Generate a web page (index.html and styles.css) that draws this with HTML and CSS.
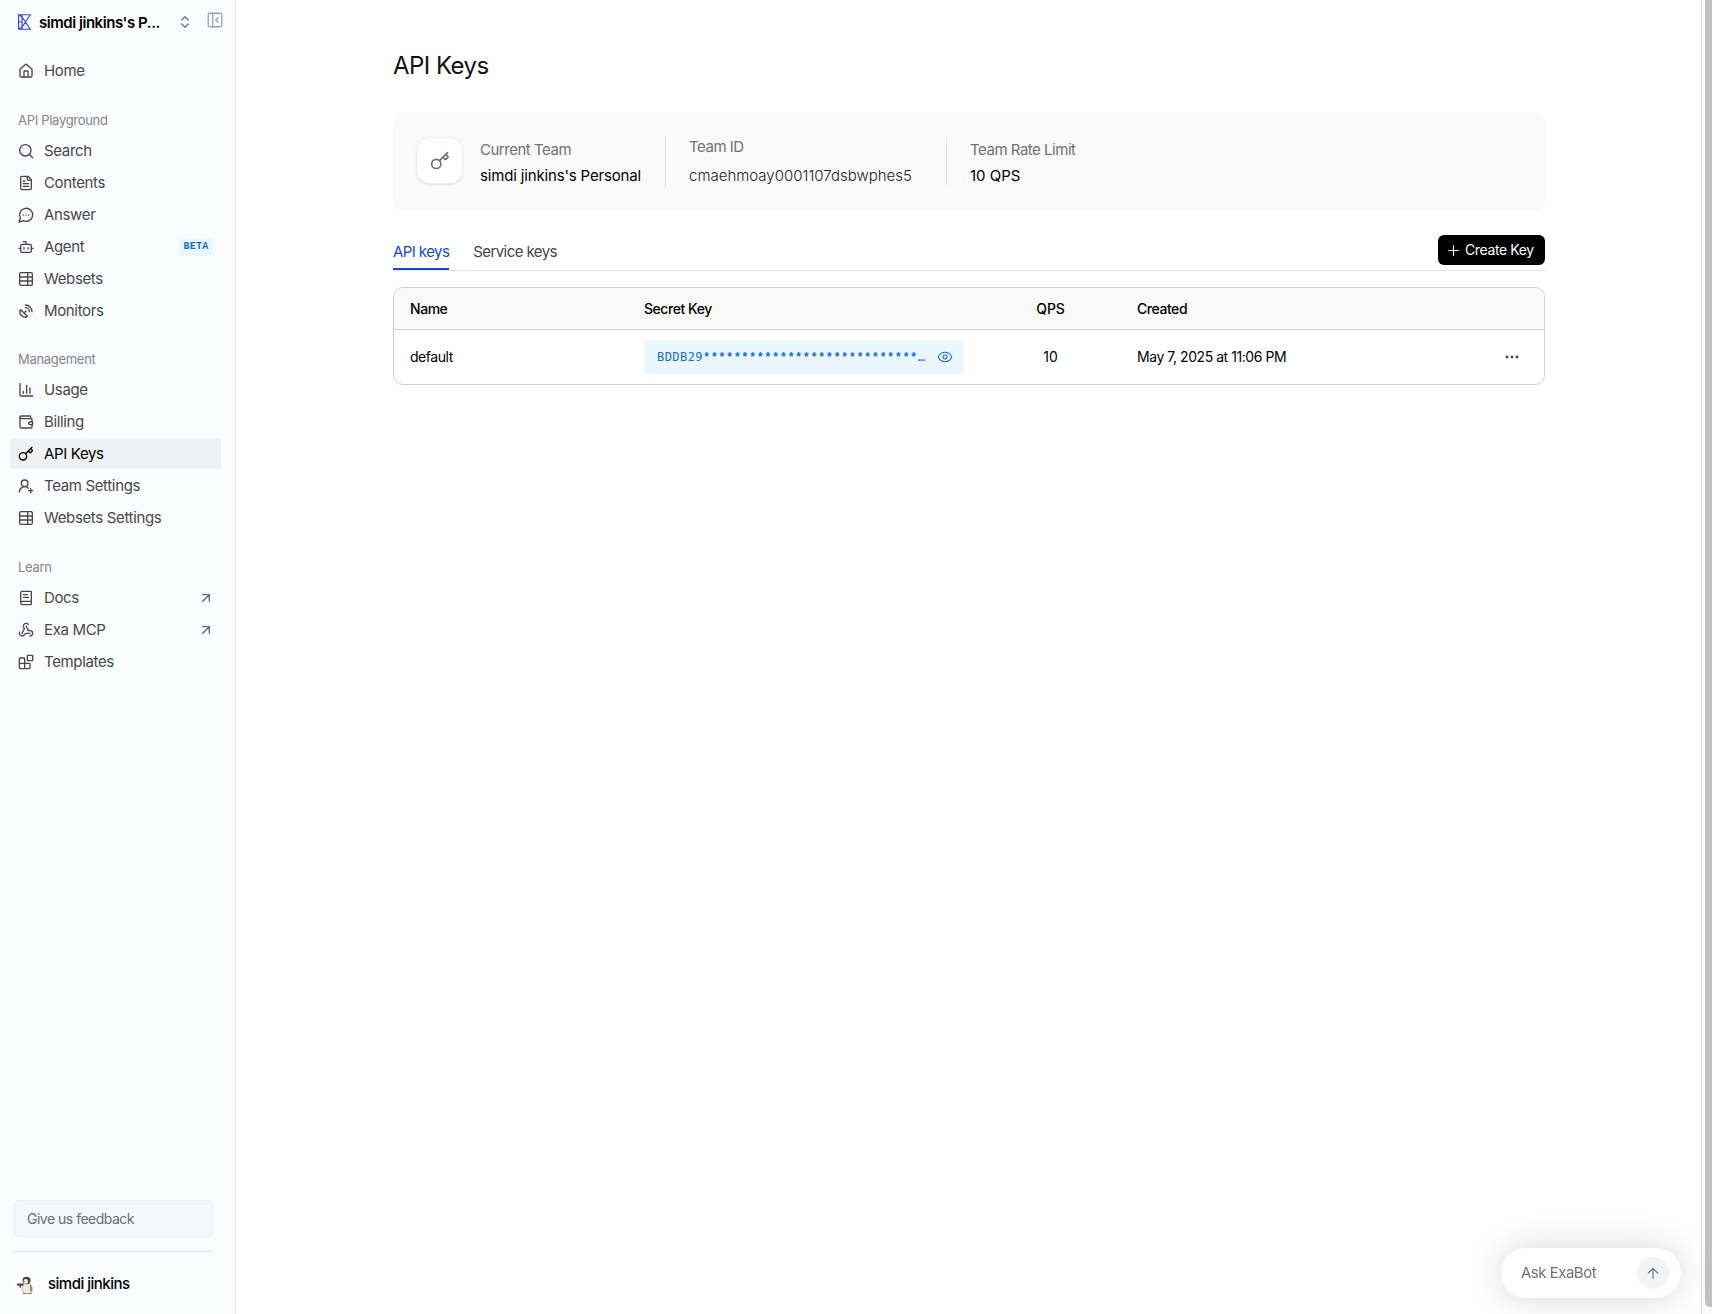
FILE: index.html
```html
<!DOCTYPE html>
<html lang="en">
<head>
    <meta charset="UTF-8">
    <meta name="viewport" content="width=device-width, initial-scale=1.0">
    <title>API Keys</title>
    <link rel="stylesheet" href="styles.css">
</head>
<body>
    <!-- Shared icons -->
    <svg class="sprite">
        <symbol id="i-key" viewBox="0 0 24 24"><path d="m15.5 7.5 2.3 2.3a1 1 0 0 0 1.4 0l2.1-2.1a1 1 0 0 0 0-1.4L19 4M21 2l-9.6 9.6"/><circle cx="7.5" cy="15.5" r="5.5"/></symbol>
        <symbol id="i-table" viewBox="0 0 24 24"><rect x="2.5" y="2.5" width="19" height="19" rx="2"/><path d="M3 9h18M3 15h18M14.500 3v18"/></symbol>
        <symbol id="i-out" viewBox="0 0 24 24"><path d="M7 7h10v10M7 17 17 7"/></symbol>
    </svg>

    <aside class="sidebar">
        <div class="team-switch">
            <svg class="logo" viewBox="0 0 13 16"><path d="M.6.7h11.8L7.5 8l4.9 7.3H.6zM4.1.7v14.6M.6 8h3.5M4.1 3l3.4 5-3.4 5M.6.7l3.5 2.3M.6 15.3 4.1 13"/></svg>
            <span class="team-name">simdi jinkins's P...</span>
            <svg class="icon chevrons" viewBox="0 0 24 24"><path d="m7 15 5 5 5-5M7 9l5-5 5 5"/></svg>
            <svg class="icon collapse" viewBox="0 0 24 24"><rect x="3" y="3" width="18" height="18" rx="2"/><path d="M9 3v18M16 15l-3-3 3-3"/></svg>
        </div>

        <nav class="nav">
            <a class="item"><svg class="icon" viewBox="0 0 24 24"><path d="M15 21v-8a1 1 0 0 0-1-1h-4a1 1 0 0 0-1 1v8"/><path d="M3 10a2 2 0 0 1 .7-1.5l7-6a2 2 0 0 1 2.6 0l7 6A2 2 0 0 1 21 10v9a2 2 0 0 1-2 2H5a2 2 0 0 1-2-2z"/></svg>Home</a>
        </nav>

        <h2 class="label">API Playground</h2>
        <nav class="nav">
            <a class="item"><svg class="icon" viewBox="0 0 24 24"><circle cx="11" cy="11" r="8.5"/><path d="m22 22-4.8-4.8"/></svg>Search</a>
            <a class="item"><svg class="icon" viewBox="0 0 24 24"><path d="M15 2H6a2 2 0 0 0-2 2v16a2 2 0 0 0 2 2h12a2 2 0 0 0 2-2V7z"/><path d="M14 2v4a2 2 0 0 0 2 2h4M10 9H8M16 13H8M16 17H8"/></svg>Contents</a>
            <a class="item"><svg class="icon" viewBox="0 0 24 24"><path d="M7.9 20.500A9.800 9.800 0 1 0 3.500 16.100L1.500 22.500z"/><path d="M8 12h.01M12 12h.01M16 12h.01"/></svg>Answer</a>
            <a class="item"><svg class="icon" viewBox="0 0 24 24"><path d="M12 8V4H8M1.500 14H4M20 14h2.500M15 13v2M9 13v2"/><rect x="4" y="8" width="16" height="12" rx="2"/></svg>Agent<span class="beta">BETA</span></a>
            <a class="item"><svg class="icon"><use href="#i-table"/></svg>Websets</a>
            <a class="item"><svg class="icon" viewBox="0 0 24 24"><path d="M4 10a7.3 7.3 0 0 0 10 10ZM9 15l3-3M17 13a6 6 0 0 0-6-6M21 13A10 10 0 0 0 11 3"/></svg>Monitors</a>
        </nav>

        <h2 class="label label-tight">Management</h2>
        <nav class="nav">
            <a class="item"><svg class="icon" viewBox="0 0 24 24"><path d="M3 2v17a2 2 0 0 0 2 2h17M8 17v-3M13 17V5M18 17V9"/></svg>Usage</a>
            <a class="item"><svg class="icon" viewBox="0 0 24 24"><path d="M19 7V4a1 1 0 0 0-1-1H5a2 2 0 0 0 0 4h15a1 1 0 0 1 1 1v4h-3a2 2 0 0 0 0 4h3a1 1 0 0 0 1-1v-2a1 1 0 0 0-1-1"/><path d="M3 5v14a2 2 0 0 0 2 2h15a1 1 0 0 0 1-1v-4"/></svg>Billing</a>
            <a class="item active"><svg class="icon"><use href="#i-key"/></svg>API Keys</a>
            <a class="item"><svg class="icon" viewBox="0 0 24 24"><path d="M2 21a8 8 0 0 1 13.3-6M19 16v6M22 19h-6"/><circle cx="10" cy="8" r="5"/></svg>Team Settings</a>
            <a class="item"><svg class="icon"><use href="#i-table"/></svg>Websets Settings</a>
        </nav>

        <h2 class="label">Learn</h2>
        <nav class="nav">
            <a class="item"><svg class="icon" viewBox="0 0 24 24"><path d="M4 19.5v-15A2.5 2.5 0 0 1 6.5 2H19a1 1 0 0 1 1 1v18a1 1 0 0 1-1 1H6.5a1 1 0 0 1 0-5H20M8 11h8M8 7h6"/></svg>Docs<svg class="icon out"><use href="#i-out"/></svg></a>
            <a class="item"><svg class="icon" viewBox="0 0 24 24"><path d="M18 16.98h-5.99c-1.1 0-1.95.94-2.48 1.9A4 4 0 0 1 2 17c.01-.7.2-1.4.57-2"/><path d="m6 17 3.13-5.78c.53-.97.1-2.18-.5-3.1a4 4 0 1 1 6.89-4.06"/><path d="m12 6 3.13 5.73C15.66 12.7 16.9 13 18 13a4 4 0 0 1 0 8"/></svg>Exa MCP<svg class="icon out"><use href="#i-out"/></svg></a>
            <a class="item"><svg class="icon" viewBox="0 0 24 24"><rect x="14" y="2" width="8" height="8" rx="1"/><path d="M10 22V7a1 1 0 0 0-1-1H4a2 2 0 0 0-2 2v12a2 2 0 0 0 2 2h12a2 2 0 0 0 2-2v-5a1 1 0 0 0-1-1H2"/></svg>Templates</a>
        </nav>

        <div class="bottom">
            <button class="feedback">Give us feedback</button>
            <div class="user">
                <svg class="avatar" viewBox="0 0 24 24">
                    <circle cx="12" cy="12" r="12" fill="#fff"/>
                    <path d="M8.5 11c1-1 7.5-1 9 1.5 1.2 3 1 6.5-.5 8h-7c-1.5-2-2-6-1.5-9.5z" fill="#eeebe5" stroke="#a69e95" stroke-width=".7"/>
                    <path d="M16 11c2 2 2.5 6 1.5 8l-1.5-1z" fill="#8d8178"/>
                    <ellipse cx="12.5" cy="7.5" rx="4" ry="3.7" fill="#4a3f3b"/>
                    <ellipse cx="11.8" cy="8.5" rx="2.3" ry="2.4" fill="#f3efea"/>
                    <path d="m9.5 8.2 1.8-.6v1.5z" fill="#d69a4c"/>
                    <path d="M3 10.5h6.5v2.3H7v2H5.5v-2H3z" fill="#514b48"/>
                    <path d="M9 20.5h3.5M14 20.5h3.5" stroke="#8f6c52" stroke-width="1.2"/>
                </svg>
                <span>simdi jinkins</span>
            </div>
        </div>
    </aside>

    <main class="main">
        <h1>API Keys</h1>

        <section class="team-card">
            <div class="key-box"><svg class="icon"><use href="#i-key"/></svg></div>
            <dl class="fact fact-team">
                <dt>Current Team</dt>
                <dd>simdi jinkins's Personal</dd>
            </dl>
            <dl class="fact fact-id">
                <dt>Team ID</dt>
                <dd>cmaehmoay0001107dsbwphes5</dd>
            </dl>
            <dl class="fact fact-rate">
                <dt>Team Rate Limit</dt>
                <dd>10 QPS</dd>
            </dl>
        </section>

        <div class="tabs">
            <a class="tab tab-active">API keys</a>
            <a class="tab">Service keys</a>
            <button class="create"><svg class="icon" viewBox="0 0 24 24"><path d="M3 12h18M12 3v18"/></svg>Create Key</button>
        </div>

        <div class="table">
            <div class="row head">
                <span>Name</span>
                <span>Secret Key</span>
                <span class="qps">QPS</span>
                <span>Created</span>
            </div>
            <div class="row">
                <span class="cell">default</span>
                <div class="secret">
                    <code>BDDB29<span class="stars">****************************</span>…</code>
                    <svg class="icon" viewBox="0 0 24 24"><path d="M2.06 12.35a1 1 0 0 1 0-.7 10.75 10.75 0 0 1 19.88 0 1 1 0 0 1 0 .7 10.75 10.75 0 0 1-19.88 0"/><circle cx="12" cy="12" r="3"/></svg>
                </div>
                <span class="cell qps">10</span>
                <span class="cell">May 7, 2025 at 11:06 PM</span>
                <svg class="more" viewBox="0 0 14 4"><circle cx="2" cy="2" r="1.4"/><circle cx="7" cy="2" r="1.4"/><circle cx="12" cy="2" r="1.4"/></svg>
            </div>
        </div>
    </main>

    <div class="scrollbar"><div class="thumb"></div></div>

    <div class="chat">
        <span>Ask ExaBot</span>
        <div class="send"><svg class="icon" viewBox="0 0 24 24"><path d="m4 12 8-8 8 8M12 21V4"/></svg></div>
    </div>
</body>
</html>
```
FILE: styles.css
```css
* {
    box-sizing: border-box;
}

body {
    margin: 0;
    height: 100vh;
    display: flex;
    overflow: hidden;
    background: #fff;
    color: #000;
    font-family: Inter, "Liberation Sans", sans-serif;
    font-size: 15px;
    letter-spacing: -0.35px;
}

h1, h2, dl, dt, dd {
    margin: 0;
    font-weight: 400;
}

button {
    font-family: inherit;
    border: none;
}

.sprite {
    display: none;
}

.icon {
    width: 16px;
    height: 16px;
    flex: none;
    fill: none;
    stroke: currentColor;
    stroke-width: 2;
    stroke-linecap: round;
    stroke-linejoin: round;
}

/* Sidebar */
.sidebar {
    width: 236px;
    flex: none;
    display: flex;
    flex-direction: column;
    background: #fbfcfe;
    border-right: 1px solid #e3e4e6;
}

.team-switch {
    height: 44px;
    margin-bottom: 12px;
    padding: 0 11px 0 18px;
    display: flex;
    align-items: center;
}

.logo {
    width: 13px;
    height: 16px;
    margin-right: 8px;
    fill: none;
    stroke: #3549e0;
    stroke-width: 1.2;
}

.team-name {
    width: 138px;
    font-weight: 600;
    letter-spacing: -0.45px;
    white-space: nowrap;
}

.chevrons {
    margin-left: 1px;
    color: #777;
}

.collapse {
    width: 18px;
    height: 18px;
    margin: -4px 0 0 13px;
    stroke-width: 1.7;
    color: #a0a1a3;
}

.nav {
    display: flex;
    flex-direction: column;
    gap: 2px;
    padding: 0 14px 0 10px;
}

.item {
    height: 30px;
    padding: 0 8px 2px;
    display: flex;
    align-items: center;
    gap: 10px;
    border-radius: 3px;
    color: #484848;
}

.item .icon {
    margin-top: 2px;
}

.active {
    background: #f0f1f3;
    color: #000;
}

.item .out {
    margin-left: auto;
    margin-right: -1px;
    color: #666;
}

.beta {
    width: 34px;
    height: 18px;
    margin: 2px 0 0 auto;
    border-radius: 3px;
    background: #ebf7ff;
    color: #1670c8;
    font: bold 10px/18px "Liberation Mono", monospace;
    letter-spacing: 0.3px;
    text-align: center;
}

.label {
    margin: 24px 0 6px 18px;
    font-size: 13px;
    line-height: 20px;
    letter-spacing: -0.3px;
    color: #858585;
}

.label-tight {
    margin-top: 23px;
}

.bottom {
    margin: auto 22px 0 14px;
}

.feedback {
    display: block;
    width: 100%;
    height: 37px;
    padding: 0 12px 1px;
    border: 1px solid #e6eff5;
    border-radius: 5px;
    background: #f3f8fb;
    color: #686e75;
    font-size: 14px;
    letter-spacing: -0.5px;
    text-align: left;
}

.user {
    height: 63px;
    margin-top: 14px;
    padding-top: 3px;
    display: flex;
    align-items: center;
    gap: 10px;
    border-top: 1px solid #e1e3e6;
    font-weight: 500;
    letter-spacing: -0.5px;
}

.user span {
    padding-bottom: 2px;
}

.avatar {
    width: 24px;
    height: 24px;
}

/* Main area */
.main {
    width: 1152px;
    margin: 0 156px 0 157px;
    flex: none;
}

h1 {
    margin: 51px 0 31px;
    font-size: 24px;
    line-height: 30px;
    letter-spacing: -0.55px;
    color: #111;
}

.team-card {
    height: 99px;
    padding: 24px;
    display: flex;
    align-items: flex-start;
    border-radius: 10px;
    background: #fafafa;
}

.key-box {
    width: 45px;
    height: 45px;
    margin: 2px 18px 0 0;
    display: flex;
    align-items: center;
    justify-content: center;
    border-radius: 12px;
    background: #fff;
    box-shadow: 0 0 0 1px #ececec, 0 1px 3px rgba(0, 0, 0, 0.2);
    color: #707070;
}

.key-box .icon {
    width: 20px;
    height: 20px;
}

.fact dt {
    height: 27px;
    line-height: 23px;
    letter-spacing: -0.48px;
    color: #707070;
}

.fact dd {
    line-height: 22px;
    letter-spacing: -0.16px;
    white-space: nowrap;
}

.fact-team {
    width: 185px;
    padding-top: 2px;
}

.fact-id {
    width: 281px;
    height: 51px;
    padding-left: 23px;
    border-left: 1px solid #dfdfdf;
}

.fact-id dt {
    height: 29px;
    line-height: 22px;
}

.fact-id dd {
    color: #222;
    font-weight: 300;
    letter-spacing: 0;
}

.fact-rate {
    height: 47px;
    margin-top: 2px;
    padding-left: 23px;
    border-left: 1px solid #dfdfdf;
}

.fact-rate dd {
    letter-spacing: 0;
}

.tabs {
    height: 36px;
    margin: 24px 0 16px;
    display: flex;
    gap: 24px;
    border-bottom: 1px solid #e3e3e3;
    letter-spacing: -0.58px;
}

.tab {
    height: 35px;
    line-height: 34px;
    color: #444;
}

.tab-active {
    border-bottom: 2px solid #1548cc;
    color: #1548cc;
}

.create {
    width: 107px;
    height: 30px;
    margin-left: auto;
    padding: 0 0 2px 9px;
    display: flex;
    align-items: center;
    gap: 5px;
    border-radius: 6px;
    background: #000;
    color: #fff;
    font-size: 14px;
    letter-spacing: -0.38px;
}

.create .icon {
    width: 13px;
    height: 13px;
    margin-top: 2px;
}

.table {
    border: 1px solid #cfcfcf;
    border-radius: 10px;
    overflow: hidden;
    font-size: 14px;
    letter-spacing: -0.45px;
}

.row {
    height: 54px;
    padding: 0 25px 0 16px;
    display: grid;
    grid-template-columns: 234px 320px 173px 1fr 14px;
    align-items: center;
}

.head {
    height: 42px;
    background: #f9f9f9;
    border-bottom: 1px solid #cfcfcf;
    font-weight: 500;
}

.cell {
    padding-bottom: 2px;
}

.qps {
    letter-spacing: -0.1px;
    text-align: center;
}

.secret {
    height: 34px;
    padding: 0 11px 0 13px;
    display: flex;
    align-items: center;
    justify-content: space-between;
    border-radius: 3px;
    background: #ebf7ff;
    color: #1670c8;
}

.secret .icon {
    stroke-width: 1.6;
}

.secret code {
    font: 12px "DejaVu Sans Mono", monospace;
    letter-spacing: 0.44px;
}

.stars {
    font: bold 12px "Liberation Mono", monospace;
    letter-spacing: 0.47px;
}

.more {
    width: 14px;
    height: 4px;
    fill: #444;
}

/* Page scrollbar */
.scrollbar {
    flex: 1;
    padding-left: 3px;
    background: #fafafa;
    border-left: 1px solid #e2e2e2;
}

.thumb {
    height: 1307px;
    background: #c1c1c1;
    border-radius: 0 0 0 5px;
}

/* Floating chat box */
.chat {
    position: fixed;
    right: 31px;
    bottom: 16px;
    width: 180px;
    height: 50px;
    padding: 0 12px 0 20px;
    display: flex;
    align-items: center;
    justify-content: space-between;
    border-radius: 25px;
    background: #fff;
    box-shadow: 0 0 36px rgba(0, 0, 0, 0.16);
    color: #707070;
    letter-spacing: -0.5px;
}

.chat span {
    padding-bottom: 1px;
}

.send {
    width: 32px;
    height: 32px;
    display: flex;
    align-items: center;
    justify-content: center;
    border-radius: 50%;
    background: #f3f4f6;
}

.send .icon {
    width: 14px;
    height: 14px;
}
```
